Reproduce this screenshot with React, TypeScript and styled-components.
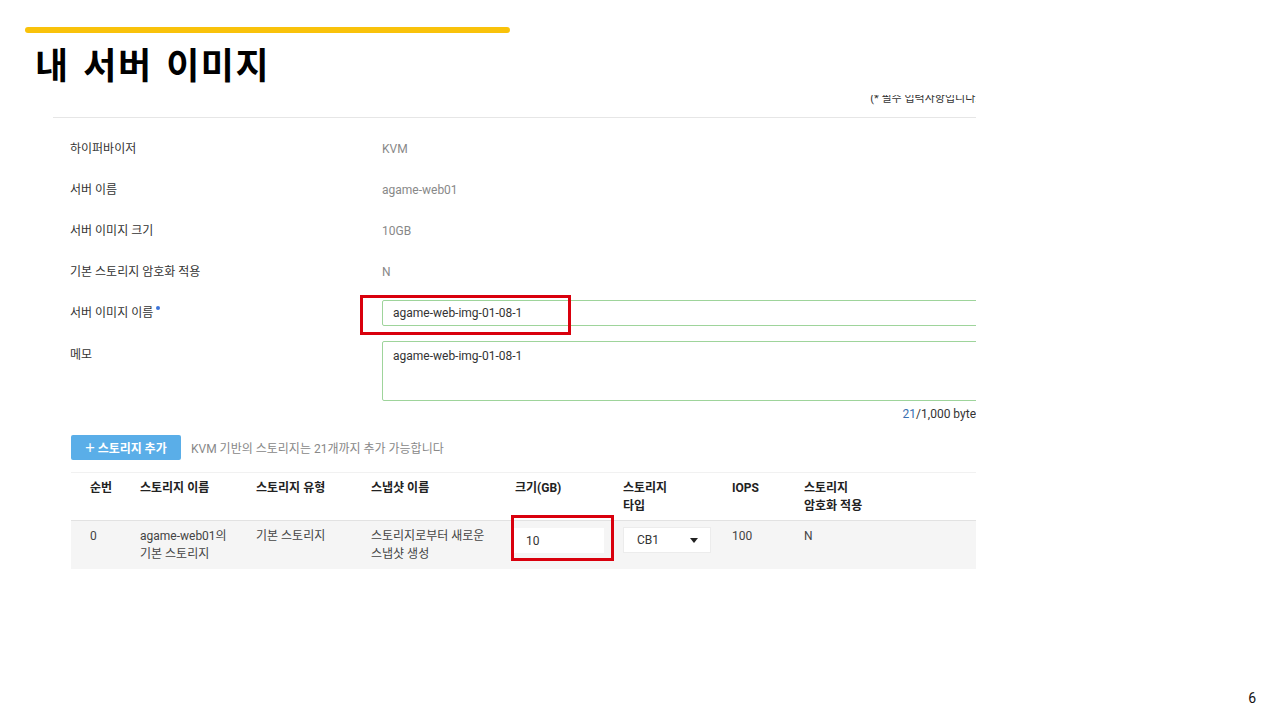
import React from 'react'
import styled, { createGlobalStyle } from 'styled-components'

const GlobalStyle = createGlobalStyle`
  html, body {
    margin: 0;
    padding: 0;
    background: #fff;
  }
  body {
    font-family: Roboto, 'Noto Sans CJK KR', sans-serif;
  }
`

const Slide = styled.div`
  position: relative;
  width: 1280px;
  height: 720px;
  box-sizing: border-box;
  padding: 27px 0 0 25px;
  display: flex;
  flex-direction: column;
  overflow: hidden;
  background: #fff;
`

const YellowBar = styled.div`
  width: 485px;
  height: 6px;
  border-radius: 3px;
  background: #f9c20a;
`

const Title = styled.h1`
  margin: 10px 0 0 10px;
  font-family: 'Noto Sans CJK KR', sans-serif;
  font-size: 36px;
  line-height: 40px;
  font-weight: 700;
  color: #000;
  letter-spacing: 1.5px;
  word-spacing: 4px;
`

const Shot = styled.div`
  margin: 12px 0 0 28px;
  width: 923px;
  overflow: hidden;
  font-size: 12px;
`

const NoteRow = styled.div`
  height: 22px;
  display: flex;
  justify-content: flex-end;
  align-items: flex-start;
  overflow: hidden;
  border-bottom: 1px solid #e6e6e6;
`

const Note = styled.span`
  margin-top: -3px;
  margin-right: -6px;
  color: #333;
  font-size: 11px;
  line-height: 14px;
  white-space: nowrap;
`

const Form = styled.div`
  padding: 10px 0 0 17px;
`

const Row = styled.div<{ $top?: boolean }>`
  display: flex;
  align-items: ${(p) => (p.$top ? 'flex-start' : 'center')};
  min-height: 41px;
`

const Label = styled.div<{ $top?: boolean }>`
  width: 312px;
  flex: none;
  color: #333;
  line-height: 14px;
  padding-top: ${(p) => (p.$top ? '7px' : '0')};
`

const Required = styled.span`
  display: inline-block;
  width: 4px;
  height: 4px;
  margin-left: 3px;
  border-radius: 50%;
  background: #3d74d9;
  vertical-align: 7px;
`

const Value = styled.div`
  color: #888;
  line-height: 14px;
`

const FieldWrap = styled.div`
  position: relative;
  flex: 1;
  margin-right: -3px;
`

const TextInput = styled.div`
  box-sizing: border-box;
  height: 26px;
  padding: 0 10px;
  display: flex;
  align-items: center;
  border: 1px solid #9ed49b;
  border-radius: 2px;
  color: #333;
  background: #fff;
`

const TextArea = styled.div`
  box-sizing: border-box;
  height: 60px;
  padding: 7px 10px;
  line-height: 14px;
  border: 1px solid #9ed49b;
  border-radius: 2px;
  color: #333;
  background: #fff;
`

const Highlight = styled.div<{ $l: number; $t: number; $w: number; $h: number }>`
  position: absolute;
  left: ${(p) => p.$l}px;
  top: ${(p) => p.$t}px;
  width: ${(p) => p.$w}px;
  height: ${(p) => p.$h}px;
  box-sizing: border-box;
  border: 3px solid #d9000d;
  pointer-events: none;
`

const MemoRow = styled(Row)`
  margin-top: 8px;
  min-height: 60px;
`

const Counter = styled.div`
  display: flex;
  justify-content: flex-end;
  margin: 6px 0 0 0;
  line-height: 14px;
  color: #333;
  white-space: nowrap;
`

const CountNum = styled.span`
  color: #3a6fb0;
`

const Toolbar = styled.div`
  display: flex;
  align-items: center;
  gap: 10px;
  margin: 14px 0 0 18px;
`

const AddButton = styled.div`
  width: 110px;
  height: 25px;
  display: flex;
  align-items: center;
  justify-content: center;
  gap: 3px;
  border-radius: 2px;
  background: #5aaee8;
  color: #fff;
  font-family: 'Noto Sans CJK KR', sans-serif;
  font-weight: 700;
  font-size: 12px;
`

const Plus = styled.span`
  font-size: 17px;
  font-weight: 400;
  line-height: 1;
  margin-top: -2px;
`

const Hint = styled.span`
  color: #888;
  font-size: 12px;
`

const Table = styled.div`
  margin: 12px 0 0 18px;
`

const Grid = styled.div`
  display: grid;
  grid-template-columns: 50px 116px 115px 144px 108px 109px 72px 1fr;
  padding-left: 19px;
`

const HeadRow = styled(Grid)`
  height: 48px;
  box-sizing: border-box;
  padding-top: 6px;
  border-top: 1px solid #f1f1f1;
  background: #fff;
`

const BodyRow = styled(Grid)`
  height: 49px;
  box-sizing: border-box;
  padding-top: 6px;
  border-top: 1px solid #e2e2e2;
  background: #f5f5f5;
`

const HeadCell = styled.div`
  font-weight: 700;
  color: #222;
  line-height: 18px;
`

const Cell = styled.div`
  color: #444;
  line-height: 18px;
`

const SizeCell = styled.div`
  position: relative;
  padding-top: 1px;
  margin-left: -1px;
`

const SizeInput = styled.div`
  box-sizing: border-box;
  width: 90px;
  height: 25px;
  padding-left: 12px;
  display: flex;
  align-items: center;
  background: #fff;
  color: #333;
`

const Select = styled.div`
  box-sizing: border-box;
  width: 88px;
  height: 26px;
  padding: 0 12px 0 13px;
  display: flex;
  align-items: center;
  justify-content: space-between;
  background: #fff;
  border: 1px solid #ececec;
  color: #333;
`

const Caret = styled.span`
  width: 0;
  height: 0;
  border-left: 4px solid transparent;
  border-right: 4px solid transparent;
  border-top: 5px solid #222;
`

const PageNo = styled.div`
  margin-top: auto;
  align-self: flex-end;
  margin-right: 24px;
  margin-bottom: 14px;
  font-size: 14px;
  color: #111;
`

const infoRows = [
  { label: '하이퍼바이저', value: 'KVM' },
  { label: '서버 이름', value: 'agame-web01' },
  { label: '서버 이미지 크기', value: '10GB' },
  { label: '기본 스토리지 암호화 적용', value: 'N' },
]

export default function App() {
  return (
    <Slide>
      <GlobalStyle />
      <YellowBar />
      <Title>내 서버 이미지</Title>
      <Shot>
        <NoteRow>
          <Note>(* 필수 입력사항입니다.)</Note>
        </NoteRow>
        <Form>
          {infoRows.map((r) => (
            <Row key={r.label}>
              <Label>{r.label}</Label>
              <Value>{r.value}</Value>
            </Row>
          ))}
          <Row>
            <Label>
              서버 이미지 이름
              <Required />
            </Label>
            <FieldWrap>
              <TextInput>agame-web-img-01-08-1</TextInput>
              <Highlight $l={-22} $t={-5} $w={211} $h={40} />
            </FieldWrap>
          </Row>
          <MemoRow $top>
            <Label $top>메모</Label>
            <FieldWrap>
              <TextArea>agame-web-img-01-08-1</TextArea>
            </FieldWrap>
          </MemoRow>
          <Counter>
            <CountNum>21</CountNum>/1,000 byte
          </Counter>
        </Form>
        <Toolbar>
          <AddButton>
            <Plus>+</Plus>스토리지 추가
          </AddButton>
          <Hint>KVM 기반의 스토리지는 21개까지 추가 가능합니다</Hint>
        </Toolbar>
        <Table>
          <HeadRow>
            <HeadCell>순번</HeadCell>
            <HeadCell>스토리지 이름</HeadCell>
            <HeadCell>스토리지 유형</HeadCell>
            <HeadCell>스냅샷 이름</HeadCell>
            <HeadCell>크기(GB)</HeadCell>
            <HeadCell>
              스토리지
              <br />
              타입
            </HeadCell>
            <HeadCell>IOPS</HeadCell>
            <HeadCell>
              스토리지
              <br />
              암호화 적용
            </HeadCell>
          </HeadRow>
          <BodyRow>
            <Cell>0</Cell>
            <Cell>
              agame-web01의
              <br />
              기본 스토리지
            </Cell>
            <Cell>기본 스토리지</Cell>
            <Cell>
              스토리지로부터 새로운
              <br />
              스냅샷 생성
            </Cell>
            <SizeCell>
              <SizeInput>10</SizeInput>
              <Highlight $l={-3} $t={-12} $w={103} $h={46} />
            </SizeCell>
            <Cell>
              <Select>
                CB1
                <Caret />
              </Select>
            </Cell>
            <Cell>100</Cell>
            <Cell>N</Cell>
          </BodyRow>
        </Table>
      </Shot>
      <PageNo>6</PageNo>
    </Slide>
  )
}
